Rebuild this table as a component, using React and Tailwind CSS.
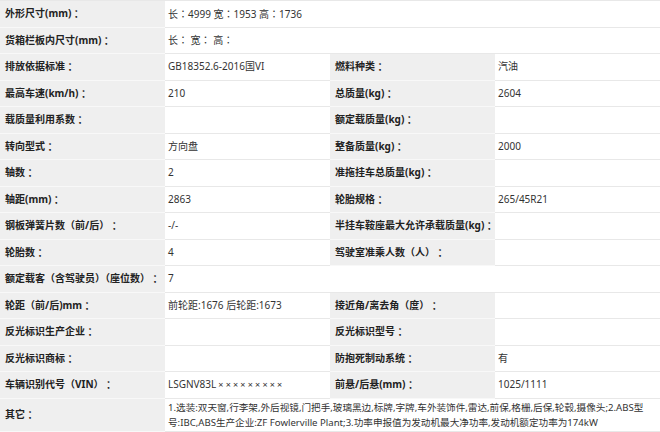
import React from "react";

const font = { fontFamily: '"Noto Sans", "Noto Sans CJK SC", sans-serif' };
const colonFont = { fontFamily: '"Noto Sans CJK TC", sans-serif' };

const rows = [
  { a: "外形尺寸(mm)", b: "长：4999 宽：1953 高：1736", wide: true },
  { a: "货箱栏板内尺寸(mm)", b: "长： 宽： 高：", wide: true },
  { a: "排放依据标准", b: "GB18352.6-2016国VI", c: "燃料种类", d: "汽油" },
  { a: "最高车速(km/h)", b: "210", c: "总质量(kg)", d: "2604" },
  { a: "载质量利用系数", b: "", c: "额定载质量(kg)", d: "" },
  { a: "转向型式", b: "方向盘", c: "整备质量(kg)", d: "2000" },
  { a: "轴数", b: "2", c: "准拖挂车总质量(kg)", d: "" },
  { a: "轴距(mm)", b: "2863", c: "轮胎规格", d: "265/45R21" },
  { a: "钢板弹簧片数（前/后）", b: "-/-", c: "半挂车鞍座最大允许承载质量(kg)", d: "" },
  { a: "轮胎数", b: "4", c: "驾驶室准乘人数（人）", d: "" },
  { a: "额定载客（含驾驶员）（座位数）", b: "7", wide: true },
  { a: "轮距（前/后)mm", b: "前轮距:1676 后轮距:1673", c: "接近角/离去角（度）", d: "" },
  { a: "反光标识生产企业", b: "", c: "反光标识型号", d: "" },
  { a: "反光标识商标", b: "", c: "防抱死制动系统", d: "有" },
  { a: "车辆识别代号（VIN）", b: "vin", c: "前悬/后悬(mm)", d: "1025/1111" },
];

function Colon() {
  return <span style={colonFont}>：</span>;
}

// value text: fullwidth colons drawn centred like the source font
function withColons(text) {
  const parts = text.split("：");
  return (
    <span className="whitespace-pre">
      {parts.map((p, i) => (
        <React.Fragment key={i}>
          {p}
          {i < parts.length - 1 && <Colon />}
        </React.Fragment>
      ))}
    </span>
  );
}

function Label({ children, tall }) {
  return (
    <div
      className={`flex items-center bg-[#efefef] pl-[5px] border-b border-[#f8f8f8] font-bold text-[10px] text-[#222] whitespace-nowrap ${
        tall ? "h-[33px]" : "h-[26.5px]"
      }`}
    >
      {children}
      <Colon />
    </div>
  );
}

function Value({ children, span }) {
  let content = withColons(children);
  if (children === "vin") {
    content = (
      <span>
        LSGNV83L<span className="ml-[2px] tracking-[2.2px] text-[9px]">×××××××××</span>
      </span>
    );
  }
  return (
    <div
      className={`flex items-center bg-white pl-[3px] h-[26.5px] border-b border-[#e8e8e8] text-[10px] text-[#333] whitespace-nowrap ${
        span ? "col-span-3" : ""
      }`}
    >
      {content}
    </div>
  );
}

export default function App() {
  return (
    <div className="w-[660px] h-[432px] overflow-hidden bg-white" style={font}>
      <div className="grid grid-cols-[165px_165px_165px_165px] border-t border-r border-[#e8e8e8] w-[660px]">
        {rows.map((r, i) =>
          r.wide ? (
            <React.Fragment key={i}>
              <Label>{r.a}</Label>
              <Value span>{r.b}</Value>
            </React.Fragment>
          ) : (
            <React.Fragment key={i}>
              <Label>{r.a}</Label>
              <Value>{r.b}</Value>
              <Label>{r.c}</Label>
              <Value>{r.d}</Value>
            </React.Fragment>
          )
        )}
        <Label tall>其它</Label>
        <div className="col-span-3 flex items-center bg-white pl-[3px] h-[33px] border-b border-[#e8e8e8] text-[9.6px] leading-[15px] text-[#333] whitespace-nowrap">
          <div>
            1.选装:双天窗,行李架,外后视镜,门把手,玻璃黑边,标牌,字牌,车外装饰件,雷达,前保,格栅,后保,轮毂,摄像头;2.ABS型
            <br />
            号:IBC,ABS生产企业:ZF Fowlerville Plant;3.功率申报值为发动机最大净功率,发动机额定功率为174kW
          </div>
        </div>
      </div>
    </div>
  );
}
